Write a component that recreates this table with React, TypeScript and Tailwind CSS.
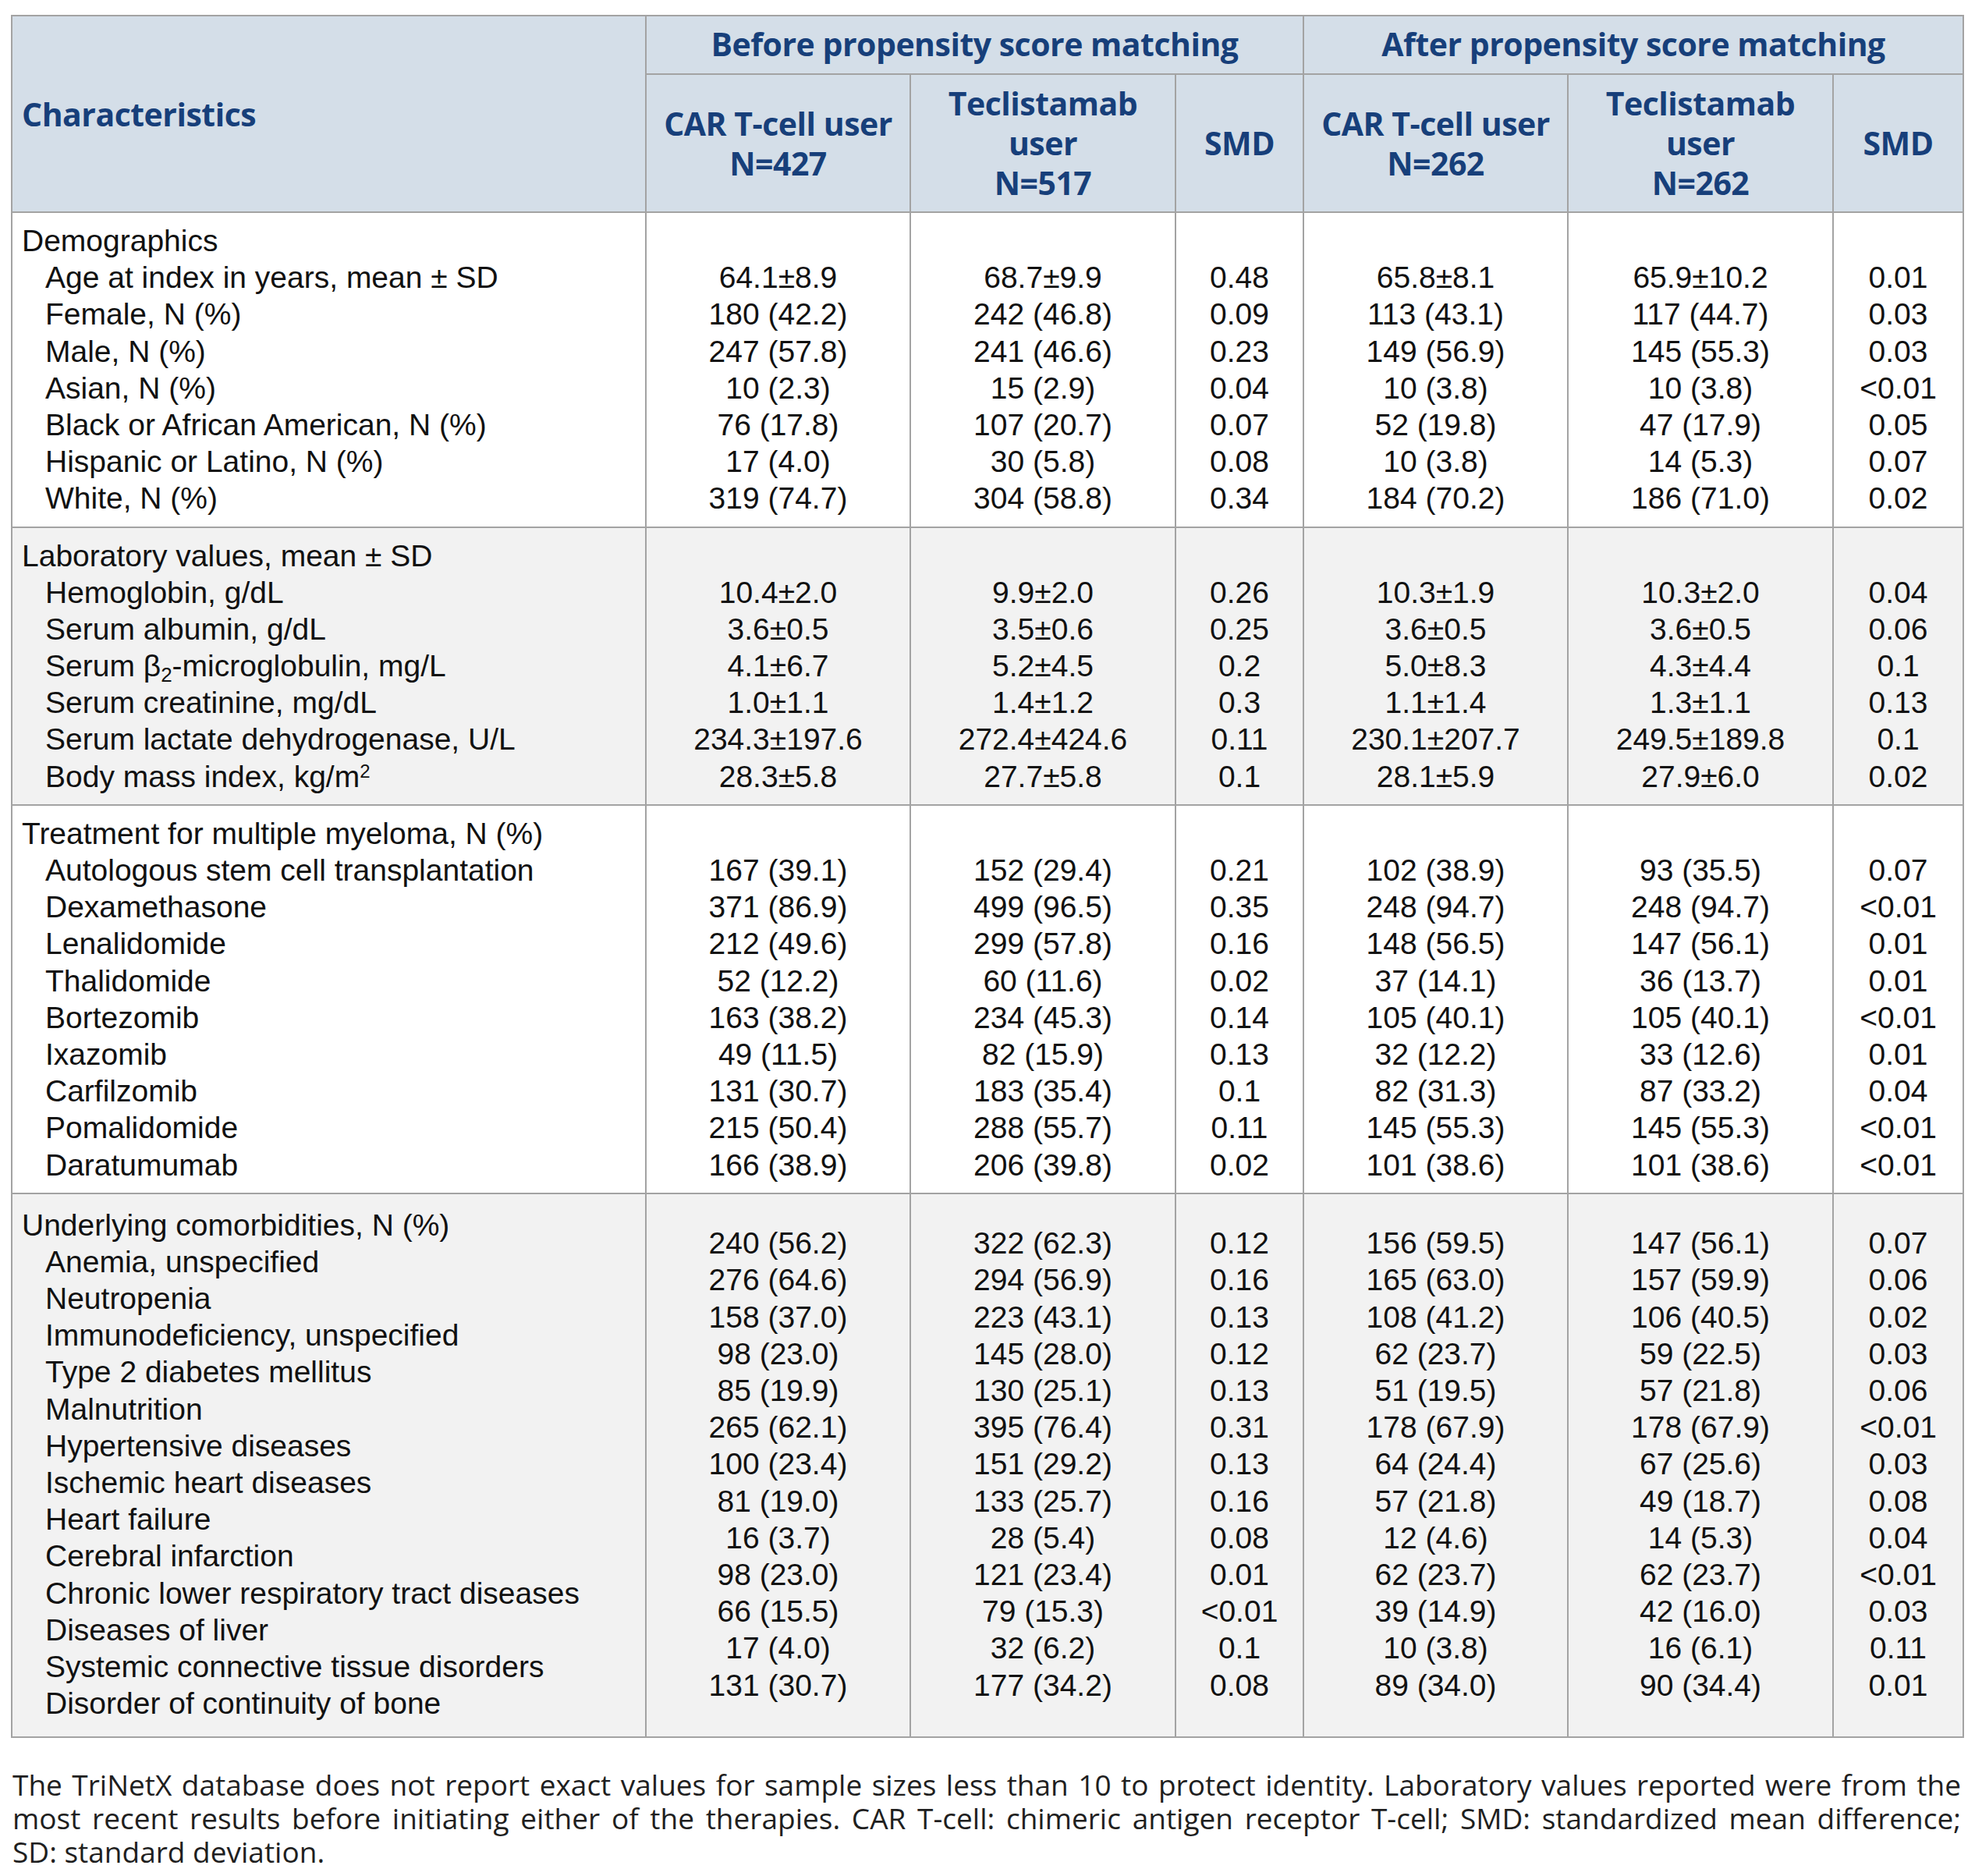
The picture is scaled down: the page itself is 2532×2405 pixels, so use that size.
type Row = [string, string, string, string, string, string];

type Section = {
  title: string;
  labels: React.ReactNode[];
  values: Row[];
  centered?: boolean;
  shade?: boolean;
};

const sections: Section[] = [
  {
    title: 'Demographics',
    labels: [
      'Age at index in years, mean ± SD',
      'Female, N (%)',
      'Male, N (%)',
      'Asian, N (%)',
      'Black or African American, N (%)',
      'Hispanic or Latino, N (%)',
      'White, N (%)',
    ],
    values: [
      ['64.1±8.9', '68.7±9.9', '0.48', '65.8±8.1', '65.9±10.2', '0.01'],
      ['180 (42.2)', '242 (46.8)', '0.09', '113 (43.1)', '117 (44.7)', '0.03'],
      ['247 (57.8)', '241 (46.6)', '0.23', '149 (56.9)', '145 (55.3)', '0.03'],
      ['10 (2.3)', '15 (2.9)', '0.04', '10 (3.8)', '10 (3.8)', '<0.01'],
      ['76 (17.8)', '107 (20.7)', '0.07', '52 (19.8)', '47 (17.9)', '0.05'],
      ['17 (4.0)', '30 (5.8)', '0.08', '10 (3.8)', '14 (5.3)', '0.07'],
      ['319 (74.7)', '304 (58.8)', '0.34', '184 (70.2)', '186 (71.0)', '0.02'],
    ],
  },
  {
    title: 'Laboratory values, mean ± SD',
    shade: true,
    labels: [
      'Hemoglobin, g/dL',
      'Serum albumin, g/dL',
      <>
        Serum β<sub className="text-[26px]">2</sub>-microglobulin, mg/L
      </>,
      'Serum creatinine, mg/dL',
      'Serum lactate dehydrogenase, U/L',
      <>
        Body mass index, kg/m<sup className="text-[24px]">2</sup>
      </>,
    ],
    values: [
      ['10.4±2.0', '9.9±2.0', '0.26', '10.3±1.9', '10.3±2.0', '0.04'],
      ['3.6±0.5', '3.5±0.6', '0.25', '3.6±0.5', '3.6±0.5', '0.06'],
      ['4.1±6.7', '5.2±4.5', '0.2', '5.0±8.3', '4.3±4.4', '0.1'],
      ['1.0±1.1', '1.4±1.2', '0.3', '1.1±1.4', '1.3±1.1', '0.13'],
      ['234.3±197.6', '272.4±424.6', '0.11', '230.1±207.7', '249.5±189.8', '0.1'],
      ['28.3±5.8', '27.7±5.8', '0.1', '28.1±5.9', '27.9±6.0', '0.02'],
    ],
  },
  {
    title: 'Treatment for multiple myeloma, N (%)',
    labels: [
      'Autologous stem cell transplantation',
      'Dexamethasone',
      'Lenalidomide',
      'Thalidomide',
      'Bortezomib',
      'Ixazomib',
      'Carfilzomib',
      'Pomalidomide',
      'Daratumumab',
    ],
    values: [
      ['167 (39.1)', '152 (29.4)', '0.21', '102 (38.9)', '93 (35.5)', '0.07'],
      ['371 (86.9)', '499 (96.5)', '0.35', '248 (94.7)', '248 (94.7)', '<0.01'],
      ['212 (49.6)', '299 (57.8)', '0.16', '148 (56.5)', '147 (56.1)', '0.01'],
      ['52 (12.2)', '60 (11.6)', '0.02', '37 (14.1)', '36 (13.7)', '0.01'],
      ['163 (38.2)', '234 (45.3)', '0.14', '105 (40.1)', '105 (40.1)', '<0.01'],
      ['49 (11.5)', '82 (15.9)', '0.13', '32 (12.2)', '33 (12.6)', '0.01'],
      ['131 (30.7)', '183 (35.4)', '0.1', '82 (31.3)', '87 (33.2)', '0.04'],
      ['215 (50.4)', '288 (55.7)', '0.11', '145 (55.3)', '145 (55.3)', '<0.01'],
      ['166 (38.9)', '206 (39.8)', '0.02', '101 (38.6)', '101 (38.6)', '<0.01'],
    ],
  },
  {
    title: 'Underlying comorbidities, N (%)',
    shade: true,
    centered: true,
    labels: [
      'Anemia, unspecified',
      'Neutropenia',
      'Immunodeficiency, unspecified',
      'Type 2 diabetes mellitus',
      'Malnutrition',
      'Hypertensive diseases',
      'Ischemic heart diseases',
      'Heart failure',
      'Cerebral infarction',
      'Chronic lower respiratory tract diseases',
      'Diseases of liver',
      'Systemic connective tissue disorders',
      'Disorder of continuity of bone',
    ],
    values: [
      ['240 (56.2)', '322 (62.3)', '0.12', '156 (59.5)', '147 (56.1)', '0.07'],
      ['276 (64.6)', '294 (56.9)', '0.16', '165 (63.0)', '157 (59.9)', '0.06'],
      ['158 (37.0)', '223 (43.1)', '0.13', '108 (41.2)', '106 (40.5)', '0.02'],
      ['98 (23.0)', '145 (28.0)', '0.12', '62 (23.7)', '59 (22.5)', '0.03'],
      ['85 (19.9)', '130 (25.1)', '0.13', '51 (19.5)', '57 (21.8)', '0.06'],
      ['265 (62.1)', '395 (76.4)', '0.31', '178 (67.9)', '178 (67.9)', '<0.01'],
      ['100 (23.4)', '151 (29.2)', '0.13', '64 (24.4)', '67 (25.6)', '0.03'],
      ['81 (19.0)', '133 (25.7)', '0.16', '57 (21.8)', '49 (18.7)', '0.08'],
      ['16 (3.7)', '28 (5.4)', '0.08', '12 (4.6)', '14 (5.3)', '0.04'],
      ['98 (23.0)', '121 (23.4)', '0.01', '62 (23.7)', '62 (23.7)', '<0.01'],
      ['66 (15.5)', '79 (15.3)', '<0.01', '39 (14.9)', '42 (16.0)', '0.03'],
      ['17 (4.0)', '32 (6.2)', '0.1', '10 (3.8)', '16 (6.1)', '0.11'],
      ['131 (30.7)', '177 (34.2)', '0.08', '89 (34.0)', '90 (34.4)', '0.01'],
    ],
  },
];

const th = 'border-2 border-[#a3a3a3] text-center align-middle';

function SectionRow({ s }: { s: Section }) {
  const pad = s.centered ? 'pt-[16px] pb-[19px] align-middle' : 'py-[12px] align-top';
  const bg = s.shade ? 'bg-[#f2f2f2]' : 'bg-white';
  return (
    <tr className={bg}>
      <td className={`border-2 border-[#a3a3a3] pl-[12px] ${pad}`}>
        <div className="h-[47.2px]">{s.title}</div>
        {s.labels.map((l, i) => (
          <div key={i} className="h-[47.2px] pl-[30px] whitespace-nowrap">
            {l}
          </div>
        ))}
      </td>
      {[0, 1, 2, 3, 4, 5].map((c) => (
        <td key={c} className={`border-2 border-[#a3a3a3] text-center ${pad}`}>
          {!s.centered && <div className="h-[47.2px]" />}
          {s.values.map((r, i) => (
            <div key={i} className="h-[47.2px] whitespace-nowrap">
              {r[c]}
            </div>
          ))}
        </td>
      ))}
    </tr>
  );
}

export default function App() {
  return (
    <div className="min-h-screen bg-white pt-[19px] pl-[14px]">
      <table className="w-[2502px] table-fixed border-collapse font-['Liberation_Sans',Arial,sans-serif] text-[39px] leading-[47.2px] text-[#111]">
        <colgroup>
          <col className="w-[813px]" />
          <col className="w-[339px]" />
          <col className="w-[340px]" />
          <col className="w-[164px]" />
          <col className="w-[339px]" />
          <col className="w-[340px]" />
          <col className="w-[167px]" />
        </colgroup>
        <thead className="bg-[#d4dee8] font-['Open_Sans',sans-serif] font-bold text-[41px] leading-[51px] tracking-[-0.5px] text-[#173f7a]">
          <tr className="h-[75px]">
            <th rowSpan={2} className="border-2 border-[#a3a3a3] pl-[12px] text-left align-middle font-bold">
              Characteristics
            </th>
            <th colSpan={3} className={`${th} pb-[3px]`}>
              Before propensity score matching
            </th>
            <th colSpan={3} className={`${th} pb-[3px]`}>
              After propensity score matching
            </th>
          </tr>
          <tr className="h-[177px]">
            <th className={th}>
              CAR T-cell user
              <br />
              N=427
            </th>
            <th className={th}>
              Teclistamab
              <br />
              user
              <br />
              N=517
            </th>
            <th className={th}>SMD</th>
            <th className={th}>
              CAR T-cell user
              <br />
              N=262
            </th>
            <th className={th}>
              Teclistamab
              <br />
              user
              <br />
              N=262
            </th>
            <th className={th}>SMD</th>
          </tr>
        </thead>
        <tbody>
          {sections.map((s) => (
            <SectionRow key={s.title} s={s} />
          ))}
        </tbody>
      </table>

      <div className="mt-[38px] w-[2500px] pl-[2px] font-['Open_Sans',sans-serif] text-[37px] leading-[43px] text-[#1f1f1f]">
        <div className="whitespace-nowrap text-justify [text-align-last:justify]">
          The TriNetX database does not report exact values for sample sizes less than 10 to protect identity. Laboratory values reported were from the
        </div>
        <div className="whitespace-nowrap text-justify [text-align-last:justify]">
          most recent results before initiating either of the therapies. CAR T-cell: chimeric antigen receptor T-cell; SMD: standardized mean difference;
        </div>
        <div>SD: standard deviation.</div>
      </div>
    </div>
  );
}
